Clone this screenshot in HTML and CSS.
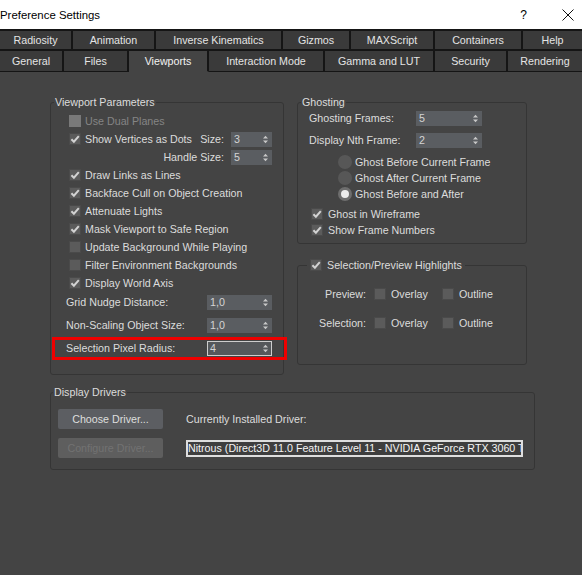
FILE: index.html
```html
<!DOCTYPE html>
<html lang="en">
<head>
    <meta charset="UTF-8">
    <title>Preference Settings</title>
    <link rel="stylesheet" href="styles.css">
</head>
<body>
    <div class="titlebar">
        <span class="title">Preference Settings</span>
        <span class="help">?</span>
        <svg class="close" width="12" height="12" viewBox="0 0 12 12"><path d="M0.5 0.5L11.5 11.5M11.5 0.5L0.5 11.5" stroke="#111" stroke-width="1"/></svg>
    </div>

    <div class="tabs">
        <div class="tab-row row-top">
            <div class="tab">Radiosity</div>
            <div class="tab">Animation</div>
            <div class="tab">Inverse Kinematics</div>
            <div class="tab">Gizmos</div>
            <div class="tab">MAXScript</div>
            <div class="tab">Containers</div>
            <div class="tab">Help</div>
        </div>
        <div class="tab-row row-bottom">
            <div class="tab">General</div>
            <div class="tab">Files</div>
            <div class="tab active">Viewports</div>
            <div class="tab">Interaction Mode</div>
            <div class="tab">Gamma and LUT</div>
            <div class="tab">Security</div>
            <div class="tab">Rendering</div>
        </div>
    </div>

    <main class="page">
        <div class="top">
            <fieldset class="group vp">
                <legend>Viewport Parameters</legend>
                <div class="vp-list">
                    <div class="row disabled"><span class="box dis"></span>Use Dual Planes</div>
                    <div class="row">
                        <span class="box"><svg width="12" height="12" viewBox="0 0 12 12"><path d="M2.4 6.2L4.9 8.7L9.8 3.2" /></svg></span>Show Vertices as Dots
                        <span class="size-lab">Size:</span>
                        <span class="spin narrow">3<svg width="5" height="9" viewBox="0 0 5 9"><path d="M0 3.6L2.5 0.8L5 3.6Z M0 5.4L5 5.4L2.5 8.2Z" /></svg></span>
                    </div>
                    <div class="row to-right">
                        <span class="size-lab">Handle Size:</span>
                        <span class="spin narrow">5<svg width="5" height="9" viewBox="0 0 5 9"><path d="M0 3.6L2.5 0.8L5 3.6Z M0 5.4L5 5.4L2.5 8.2Z" /></svg></span>
                    </div>
                    <div class="row"><span class="box"><svg width="12" height="12" viewBox="0 0 12 12"><path d="M2.4 6.2L4.9 8.7L9.8 3.2" /></svg></span>Draw Links as Lines</div>
                    <div class="row"><span class="box"><svg width="12" height="12" viewBox="0 0 12 12"><path d="M2.4 6.2L4.9 8.7L9.8 3.2" /></svg></span>Backface Cull on Object Creation</div>
                    <div class="row"><span class="box"><svg width="12" height="12" viewBox="0 0 12 12"><path d="M2.4 6.2L4.9 8.7L9.8 3.2" /></svg></span>Attenuate Lights</div>
                    <div class="row"><span class="box"><svg width="12" height="12" viewBox="0 0 12 12"><path d="M2.4 6.2L4.9 8.7L9.8 3.2" /></svg></span>Mask Viewport to Safe Region</div>
                    <div class="row"><span class="box"></span>Update Background While Playing</div>
                    <div class="row"><span class="box"></span>Filter Environment Backgrounds</div>
                    <div class="row"><span class="box"><svg width="12" height="12" viewBox="0 0 12 12"><path d="M2.4 6.2L4.9 8.7L9.8 3.2" /></svg></span>Display World Axis</div>
                </div>
                <div class="vp-params">
                    <div class="param">
                        <span class="param-lab">Grid Nudge Distance:</span>
                        <span class="spin wide">1,0<svg width="5" height="9" viewBox="0 0 5 9"><path d="M0 3.6L2.5 0.8L5 3.6Z M0 5.4L5 5.4L2.5 8.2Z" /></svg></span>
                    </div>
                    <div class="param">
                        <span class="param-lab">Non-Scaling Object Size:</span>
                        <span class="spin wide">1,0<svg width="5" height="9" viewBox="0 0 5 9"><path d="M0 3.6L2.5 0.8L5 3.6Z M0 5.4L5 5.4L2.5 8.2Z" /></svg></span>
                    </div>
                    <div class="param marked">
                        <span class="param-lab">Selection Pixel Radius:</span>
                        <span class="spin wide focus">4<svg width="5" height="9" viewBox="0 0 5 9"><path d="M0 3.6L2.5 0.8L5 3.6Z M0 5.4L5 5.4L2.5 8.2Z" /></svg></span>
                    </div>
                </div>
            </fieldset>

            <div class="side">
                <fieldset class="group ghost">
                    <legend>Ghosting</legend>
                    <div class="g-row">
                        <span class="g-lab">Ghosting Frames:</span>
                        <span class="spin g-spin">5<svg width="5" height="9" viewBox="0 0 5 9"><path d="M0 3.6L2.5 0.8L5 3.6Z M0 5.4L5 5.4L2.5 8.2Z" /></svg></span>
                    </div>
                    <div class="g-row">
                        <span class="g-lab">Display Nth Frame:</span>
                        <span class="spin g-spin">2<svg width="5" height="9" viewBox="0 0 5 9"><path d="M0 3.6L2.5 0.8L5 3.6Z M0 5.4L5 5.4L2.5 8.2Z" /></svg></span>
                    </div>
                    <div class="radios">
                        <div class="r-row"><span class="radio"></span>Ghost Before Current Frame</div>
                        <div class="r-row"><span class="radio"></span>Ghost After Current Frame</div>
                        <div class="r-row"><span class="radio on"></span>Ghost Before and After</div>
                    </div>
                    <div class="g-checks">
                        <div class="c-row"><span class="box"><svg width="12" height="12" viewBox="0 0 12 12"><path d="M2.4 6.2L4.9 8.7L9.8 3.2" /></svg></span>Ghost in Wireframe</div>
                        <div class="c-row"><span class="box"><svg width="12" height="12" viewBox="0 0 12 12"><path d="M2.4 6.2L4.9 8.7L9.8 3.2" /></svg></span>Show Frame Numbers</div>
                    </div>
                </fieldset>

                <fieldset class="group hl">
                    <legend><span class="box"><svg width="12" height="12" viewBox="0 0 12 12"><path d="M2.4 6.2L4.9 8.7L9.8 3.2" /></svg></span>Selection/Preview Highlights</legend>
                    <div class="hl-row">
                        <span class="hl-lab">Preview:</span>
                        <span class="opt"><span class="box"></span>Overlay</span>
                        <span class="opt"><span class="box"></span>Outline</span>
                    </div>
                    <div class="hl-row">
                        <span class="hl-lab">Selection:</span>
                        <span class="opt"><span class="box"></span>Overlay</span>
                        <span class="opt"><span class="box"></span>Outline</span>
                    </div>
                </fieldset>
            </div>
        </div>

        <fieldset class="group drivers">
            <legend>Display Drivers</legend>
            <div class="drv-grid">
                <div class="btn">Choose Driver...</div>
                <div class="drv-lab">Currently Installed Driver:</div>
                <div class="btn dis">Configure Driver...</div>
                <div class="drv-field">Nitrous (Direct3D 11.0 Feature Level 11 - NVIDIA GeForce RTX 3060 Ti)</div>
            </div>
        </fieldset>
    </main>
</body>
</html>
```

FILE: styles.css
```css
* {
    box-sizing: border-box;
}
body {
    margin: 0;
    background: #444444;
    color: #dcdcdc;
    font-family: 'Liberation Sans', Arial, sans-serif;
    font-size: 10.7px;
    height: 575px;
    overflow: hidden;
}
.titlebar {
    height: 29px;
    background: #ffffff;
    color: #000;
    display: flex;
    align-items: center;
    font-size: 11.4px;
}
.title {
    flex: 1;
}
.help {
    font-size: 12px;
    margin-right: 35px;
}
.close {
    margin-right: 8px;
}
.tabs {
    background: #151515;
    padding-top: 2px;
    color: #e4e4e4;
}
.tab-row {
    display: grid;
}
.row-top {
    grid-template-columns: 73px 83px 127px 68px 84px 88px 1fr;
}
.row-bottom {
    grid-template-columns: 64px 65px 80px 116px 110px 73px 1fr;
}
.tab {
    background: #3a3a3a;
    border-right: 2px solid #151515;
    display: flex;
    align-items: center;
    justify-content: center;
    white-space: nowrap;
}
.tab:last-child {
    border-right: none;
}
.row-top .tab {
    height: 20px;
    border-bottom: 2px solid #151515;
}
.row-bottom .tab {
    height: 21px;
    border-bottom: 1px solid #151515;
}
.tab.active {
    background: #444444;
    border-bottom-color: #444444;
    color: #f2f2f2;
}
.page {
    padding: 23px 0 0 50px;
}
.top {
    display: flex;
    gap: 13px;
    align-items: flex-start;
}
.group {
    margin: 0;
    padding: 0;
    min-width: 0;
    border: 1px solid #353535;
    border-radius: 3px;
}
.group legend {
    padding: 0 1px;
    margin-left: 3px;
    line-height: 14px;
    height: 14px;
}
.box {
    width: 12px;
    height: 12px;
    flex: none;
    background: #5b5b5b;
    border: 1px solid #4a4a4a;
    display: inline-flex;
    align-items: center;
    justify-content: center;
}
.box svg {
    fill: none;
    stroke: #d2d2d2;
    stroke-width: 2;
    margin: -1px;
}
.box.dis {
    background: #797979;
    border-color: #797979;
}
.spin {
    height: 15px;
    background: #5a5d61;
    color: #d4d4d4;
    display: flex;
    align-items: center;
    justify-content: space-between;
    padding: 0 4px 0 3px;
    flex: none;
}
.spin svg {
    fill: #c8c8c8;
}
.spin.focus {
    border: 1px solid #cdcdcd;
    padding-left: 2px;
    padding-right: 3px;
    background: #55585b;
}
.narrow {
    width: 41px;
}
.wide {
    width: 65px;
}

/* viewport parameters */
.vp {
    width: 234px;
}
.vp-list {
    padding: 3px 11px 0 18px;
}
.row {
    height: 18px;
    display: flex;
    align-items: center;
    white-space: nowrap;
}
.row .box {
    margin-right: 4px;
}
.row.disabled {
    color: #858585;
}
.size-lab {
    margin-left: auto;
    margin-right: 7px;
}
.vp-params {
    padding: 0 11px 16px 15px;
}
.param {
    height: 20px;
    display: flex;
    align-items: center;
    position: relative;
}
.param + .param {
    margin-top: 3px;
}
.param-lab {
    flex: 1;
}
.param.marked::after {
    content: '';
    position: absolute;
    left: -14px;
    right: -15px;
    top: -1px;
    bottom: -2px;
    border: 3px solid #ee0000;
}

/* ghosting */
.side {
    width: 230px;
    display: flex;
    flex-direction: column;
}
.ghost {
    padding-bottom: 5px;
}
.g-row {
    height: 18px;
    display: flex;
    align-items: center;
    padding-left: 11px;
}
.g-row + .g-row {
    margin-top: 4px;
}
.g-lab {
    width: 107px;
}
.g-spin {
    width: 66px;
}
.radios {
    margin-top: 5px;
    padding-left: 40px;
}
.r-row {
    height: 16px;
    display: flex;
    align-items: center;
}
.radio {
    width: 14px;
    height: 14px;
    border-radius: 50%;
    background: #575757;
    margin-right: 3px;
    flex: none;
}
.radio.on {
    background: #ececec;
    border: 3.5px solid #6e6e6e;
}
.g-checks {
    margin-top: 4px;
    padding-left: 13px;
}
.c-row {
    height: 16px;
    display: flex;
    align-items: center;
}
.c-row .box {
    margin-right: 5px;
}

/* highlights */
.hl {
    margin-top: 14px;
    padding: 13px 0 32px;
}
.hl legend {
    margin-left: 9px;
    padding: 0 3px;
    display: flex;
    align-items: center;
}
.hl legend .box {
    margin-right: 5px;
}
.hl-row {
    height: 18px;
    display: flex;
    align-items: center;
}
.hl-row + .hl-row {
    margin-top: 11px;
}
.hl-lab {
    width: 68px;
    text-align: right;
    margin-right: 8px;
}
.opt {
    width: 68px;
    display: flex;
    align-items: center;
}
.opt .box {
    margin-right: 5px;
}

/* display drivers */
.drivers {
    margin-top: 10px;
    width: 485px;
}
.drivers legend {
    margin-left: 2px;
}
.drv-grid {
    display: grid;
    grid-template-columns: 105px 337px;
    grid-template-rows: 20px 20px;
    column-gap: 23px;
    row-gap: 9px;
    padding: 10px 0 11px 7px;
}
.btn {
    background: #5c5e62;
    border-radius: 2px;
    display: flex;
    align-items: center;
    justify-content: center;
    color: #dedede;
}
.btn.dis {
    background: #5e5e5e;
    color: #727272;
}
.drv-lab {
    display: flex;
    align-items: center;
}
.drv-field {
    align-self: center;
    height: 17px;
    line-height: 13px;
    border: 2px solid #dedede;
    background: #3e3e3e;
    color: #f4f4f4;
    white-space: nowrap;
    overflow: hidden;
}
```
